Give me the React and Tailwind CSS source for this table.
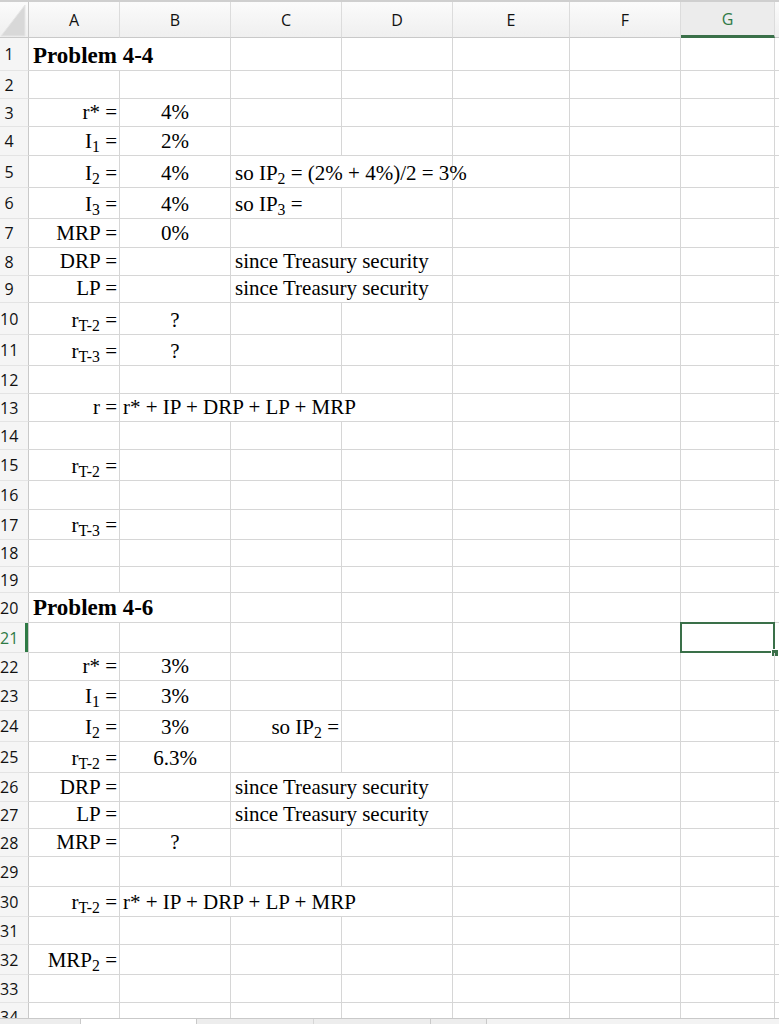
import React from 'react';

const COLS = 'grid grid-cols-[29px_91px_111px_111px_111px_117px_111px_94px_1fr]';

const L = 'justify-start pl-[4px]';
const R = 'justify-end pr-[2px]';
const C = 'justify-center';

const letters = ['A', 'B', 'C', 'D', 'E', 'F', 'G'];

const rows = [
  { n: 1, h: 'h-[33px]', cells: [{ span: 'col-span-2', w: 2, align: L, bold: true, c: 'Problem 4-4' }] },
  { n: 2, h: 'h-[28px]' },
  { n: 3, h: 'h-[28px]', cells: [{ align: R, c: 'r* =' }, { align: C, c: '4%' }] },
  { n: 4, h: 'h-[29px]', cells: [{ align: R, c: <>I<sub>1</sub> =</> }, { align: C, c: '2%' }] },
  {
    n: 5, h: 'h-[32px]',
    cells: [
      { align: R, c: <>I<sub>2</sub> =</> },
      { align: C, c: '4%' },
      { span: 'col-span-2', w: 2, align: L, c: <>so IP<sub>2</sub> = (2% + 4%)/2 = 3%</> },
    ],
  },
  {
    n: 6, h: 'h-[31px]',
    cells: [{ align: R, c: <>I<sub>3</sub> =</> }, { align: C, c: '4%' }, { align: L, c: <>so IP<sub>3</sub> =</> }],
  },
  { n: 7, h: 'h-[29px]', cells: [{ align: R, c: 'MRP =' }, { align: C, c: '0%' }] },
  {
    n: 8, h: 'h-[28px]',
    cells: [{ align: R, c: 'DRP =' }, { c: '' }, { span: 'col-span-2', w: 2, align: L, c: 'since Treasury security' }],
  },
  {
    n: 9, h: 'h-[27px]',
    cells: [{ align: R, c: 'LP =' }, { c: '' }, { span: 'col-span-2', w: 2, align: L, c: 'since Treasury security' }],
  },
  { n: 10, h: 'h-[32px]', cells: [{ align: R, c: <>r<sub>T-2</sub> =</> }, { align: C, c: '?' }] },
  { n: 11, h: 'h-[31px]', cells: [{ align: R, c: <>r<sub>T-3</sub> =</> }, { align: C, c: '?' }] },
  { n: 12, h: 'h-[28px]' },
  {
    n: 13, h: 'h-[28px]',
    cells: [{ align: R, c: 'r =' }, { span: 'col-span-3', w: 3, align: 'justify-start pl-[3px]', c: 'r* + IP + DRP + LP + MRP' }],
  },
  { n: 14, h: 'h-[28px]' },
  { n: 15, h: 'h-[31px]', cells: [{ align: R, c: <>r<sub>T-2</sub> =</> }] },
  { n: 16, h: 'h-[29px]' },
  { n: 17, h: 'h-[30px]', cells: [{ align: R, c: <>r<sub>T-3</sub> =</> }] },
  { n: 18, h: 'h-[27px]' },
  { n: 19, h: 'h-[26px]' },
  { n: 20, h: 'h-[30px]', cells: [{ span: 'col-span-2', w: 2, align: L, bold: true, c: 'Problem 4-6' }] },
  { n: 21, h: 'h-[30px]', selected: true },
  { n: 22, h: 'h-[28px]', cells: [{ align: R, c: 'r* =' }, { align: C, c: '3%' }] },
  { n: 23, h: 'h-[30px]', cells: [{ align: R, c: <>I<sub>1</sub> =</> }, { align: C, c: '3%' }] },
  {
    n: 24, h: 'h-[31px]',
    cells: [{ align: R, c: <>I<sub>2</sub> =</> }, { align: C, c: '3%' }, { align: R, c: <>so IP<sub>2</sub> =</> }],
  },
  { n: 25, h: 'h-[31px]', cells: [{ align: R, c: <>r<sub>T-2</sub> =</> }, { align: C, c: '6.3%' }] },
  {
    n: 26, h: 'h-[29px]',
    cells: [{ align: R, c: 'DRP =' }, { c: '' }, { span: 'col-span-2', w: 2, align: L, c: 'since Treasury security' }],
  },
  {
    n: 27, h: 'h-[27px]',
    cells: [{ align: R, c: 'LP =' }, { c: '' }, { span: 'col-span-2', w: 2, align: L, c: 'since Treasury security' }],
  },
  { n: 28, h: 'h-[28px]', cells: [{ align: R, c: 'MRP =' }, { align: C, c: '?' }] },
  { n: 29, h: 'h-[30px]' },
  {
    n: 30, h: 'h-[30px]',
    cells: [
      { align: R, c: <>r<sub>T-2</sub> =</> },
      { span: 'col-span-3', w: 3, align: 'justify-start pl-[3px]', c: 'r* + IP + DRP + LP + MRP' },
    ],
  },
  { n: 31, h: 'h-[28px]' },
  { n: 32, h: 'h-[30px]', cells: [{ align: R, c: <>MRP<sub>2</sub> =</> }] },
  { n: 33, h: 'h-[28px]' },
  { n: 34, h: 'h-[28px]' },
];

const RowHead = ({ n, selected }) => (
  <div
    className={`flex items-center bg-[#f5f5f5] border-b border-b-[#e4e4e4] border-r border-r-[#c9c9c9] font-['Open_Sans',sans-serif] text-[16px] ${
      selected ? 'text-[#2f7a45]' : 'text-[#111]'
    }`}
  >
    <span className="w-[18px] text-center leading-none">{n}</span>
    {selected && <span className="ml-auto w-[3px] self-stretch bg-[#2f7a45]" />}
  </div>
);

const Cell = ({ cell, last, selected }) => (
  <div
    className={`relative flex items-end whitespace-nowrap border-r border-b border-[#d6d6d6] pb-[3px] ${cell.span || ''} ${
      cell.align || ''
    }`}
  >
    <span className={cell.bold ? 'font-bold text-[23px] leading-none' : 'text-[21px] leading-none'}>{cell.c}</span>
    {last && selected && (
      <div className="absolute -left-px -top-px -right-px -bottom-px border-[2.5px] border-[#3a7049]">
        <div className="absolute -right-[6px] -bottom-[6px] w-[8px] h-[8px] bg-[#3a7049] border border-white" />
      </div>
    )}
  </div>
);

const SheetRow = ({ row }) => {
  const cells = [...(row.cells || [])];
  let used = cells.reduce((s, c) => s + (c.w || 1), 0);
  while (used < 7) {
    cells.push({ c: '' });
    used += 1;
  }
  return (
    <div className={`${COLS} ${row.h}`}>
      <RowHead n={row.n} selected={row.selected} />
      {cells.map((cell, i) => (
        <Cell key={i} cell={cell} last={i === cells.length - 1} selected={row.selected} />
      ))}
      <div className="border-b border-[#d6d6d6]" />
    </div>
  );
};

const App = () => {
  return (
    <div className="w-[779px] h-[1024px] overflow-hidden bg-white flex flex-col font-['Liberation_Serif','Times_New_Roman',serif] text-black">
      {/* column headers */}
      <div className={`${COLS} h-[38px] shrink-0 border-t-2 border-[#cfcfcf] bg-linear-to-b from-[#fbfbfb] to-[#efefef]`}>
        <div className="relative border-r border-b border-[#c9c9c9]">
          <svg className="absolute left-0 top-0" width="28" height="36" viewBox="0 0 28 36">
            <polygon points="25,3 25,34 1,34" fill="#d8d8d8" stroke="#e6e6e6" strokeWidth="1" />
          </svg>
        </div>
        {letters.map((l) => (
          <div
            key={l}
            className={`flex items-center justify-center border-r border-r-[#dcdcdc] font-['Open_Sans',sans-serif] text-[16px] ${
              l === 'G'
                ? 'bg-[#ececec] text-[#2f7a45] border-b-[3px] border-b-[#3a7049]'
                : 'text-[#111] border-b border-b-[#c9c9c9]'
            }`}
          >
            {l}
          </div>
        ))}
        <div className="border-b border-[#c9c9c9]" />
      </div>

      {/* grid */}
      <div className="flex-1 overflow-hidden">
        {rows.map((row) => (
          <SheetRow key={row.n} row={row} />
        ))}
      </div>

      {/* sheet tab strip */}
      <div className="h-[6px] shrink-0 flex border-t border-[#c9c9c9] bg-[#ededed]">
        <div className="w-[81px] border-r border-[#c9c9c9]" />
        <div className="w-[116px] bg-white border-r border-[#c9c9c9]" />
        <div className="w-[117px] border-r border-[#d6d6d6]" />
        <div className="w-[117px] border-r border-[#c9c9c9]" />
        <div className="w-[56px] border-r border-[#c9c9c9]" />
        <div className="flex-1 bg-[#f3f3f3]" />
      </div>
    </div>
  );
};

export default App;
